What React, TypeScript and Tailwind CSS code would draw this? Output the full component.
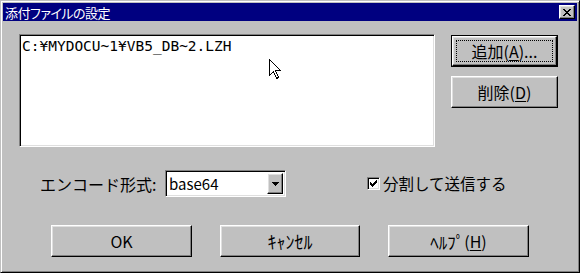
import React from "react";

const jp = "font-['Noto_Sans_CJK_JP',sans-serif]";

// raised 3D edge used by push buttons
const raised =
  "border border-t-white border-l-white border-r-black border-b-black shadow-[inset_-1px_-1px_#808080,inset_1px_1px_#dfdfdf] bg-[#c0c0c0]";
// sunken edge used by the list and the combo field
const sunken =
  "border border-t-[#808080] border-l-[#808080] border-r-white border-b-white shadow-[inset_1px_1px_#000,inset_-1px_-1px_#dfdfdf] bg-white";

function Button({
  children,
  className,
  isDefault,
}: {
  children: React.ReactNode;
  className: string;
  isDefault?: boolean;
}) {
  if (isDefault) {
    return (
      <div className={`border border-black ${className} flex`}>
        <div className={`${raised} flex-1 flex p-[3px]`}>
          <div className="flex-1 flex items-center justify-center border border-dotted border-black text-[16px] text-black">
            {children}
          </div>
        </div>
      </div>
    );
  }
  return (
    <div
      className={`${raised} ${className} flex items-center justify-center text-[16px] text-black`}
    >
      {children}
    </div>
  );
}

function Cursor() {
  return (
    <svg
      className="absolute left-[249px] top-[24px]"
      width="13"
      height="21"
      viewBox="0 0 13 21"
    >
      <path
        d="M0.5 0.5 L0.5 16.5 L4.5 12.5 L7.5 19.5 L9.5 18.5 L6.5 11.5 L11.5 11.5 Z"
        fill="white"
        stroke="black"
        strokeWidth="1"
        shapeRendering="crispEdges"
      />
    </svg>
  );
}

export default function App() {
  return (
    <div
      className={`w-[580px] h-[273px] bg-[#c0c0c0] border border-t-[#c0c0c0] border-l-[#c0c0c0] border-r-black border-b-black shadow-[inset_1px_1px_#fff,inset_-1px_-1px_#808080] p-[2px] flex flex-col ${jp} leading-none`}
    >
      {/* title bar */}
      <div className="h-[18px] bg-[#000080] flex items-center justify-between pl-[2px] pr-[2px]">
        <span className="text-white text-[13px] tracking-[-0.5px] [font-feature-settings:'palt']">
          添付ファイルの設定
        </span>
        <div className={`${raised} w-[16px] h-[14px] flex items-center justify-center`}>
          <svg width="8" height="7" viewBox="0 0 8 7" shapeRendering="crispEdges">
            <path
              d="M0 0h2v1h-2zM6 0h2v1h-2zM1 1h2v1h-2zM5 1h2v1h-2zM2 2h4v1h-4zM3 3h2v1h-2zM2 4h4v1h-4zM1 5h2v1h-2zM5 5h2v1h-2zM0 6h2v1h-2zM6 6h2v1h-2z"
              fill="black"
            />
          </svg>
        </div>
      </div>

      <div className="flex flex-col pl-[16px] pt-[13px]">
        {/* list + side buttons */}
        <div className="flex">
          <div className={`${sunken} relative w-[416px] h-[113px] pl-[2px] pt-[3px]`}>
            <div className="font-['DejaVu_Sans_Mono',monospace] text-[14.5px] leading-[17px] text-black">
              C:¥MYDOCU~1¥VB5_DB~2.LZH
            </div>
            <Cursor />
          </div>
          <div className="ml-[16px] mt-[1px] flex flex-col gap-[9px]">
            <Button isDefault className="w-[107px] h-[32px]">
              追加(<span className="underline underline-offset-2">A</span>)...
            </Button>
            <Button className="w-[107px] h-[32px]">
              削除(<span className="underline underline-offset-2">D</span>)
            </Button>
          </div>
        </div>

        {/* encode row */}
        <div className="flex items-center mt-[23px] h-[27px]">
          <span className="ml-[21px] w-[125px] text-[16px] text-black">エンコード形式:</span>
          <div className={`${sunken} w-[121px] h-[27px] flex items-center justify-between pl-[3px] pr-[2px]`}>
            <span className="text-[15px] text-black">base64</span>
            <div className={`${raised} w-[16px] h-[21px] flex items-center justify-center`}>
              <svg width="7" height="4" viewBox="0 0 7 4" shapeRendering="crispEdges">
                <path d="M0 0h7v1h-7zM1 1h5v1h-5zM2 2h3v1h-3zM3 3h1v1h-1z" fill="black" />
              </svg>
            </div>
          </div>
          <div className="ml-[81px] flex items-center gap-[3px]">
            <div className={`${sunken} w-[13px] h-[13px] flex items-center justify-center`}>
              <svg width="7" height="7" viewBox="0 0 7 7" shapeRendering="crispEdges">
                <path
                  d="M6 0h1v3h-1zM5 1h1v3h-1zM4 2h1v3h-1zM3 3h1v3h-1zM2 4h1v3h-1zM1 3h1v3h-1zM0 2h1v3h-1z"
                  fill="black"
                />
              </svg>
            </div>
            <span className="text-[15.5px] text-black">分割して送信する</span>
          </div>
        </div>

        {/* bottom buttons */}
        <div className="flex mt-[28px] ml-[32px] gap-[28px]">
          <Button className="w-[141px] h-[32px]">OK</Button>
          <Button className="w-[140px] h-[32px]">
            <span className="text-[18px]">ｷｬﾝｾﾙ</span>
          </Button>
          <Button className="w-[141px] h-[32px]">
            <span className="text-[17px]">ﾍﾙﾌﾟ</span>(<span className="underline underline-offset-2">H</span>)
          </Button>
        </div>
      </div>
    </div>
  );
}
